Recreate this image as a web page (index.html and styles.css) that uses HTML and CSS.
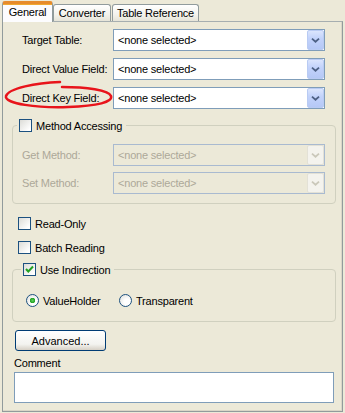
FILE: index.html
```html
<!DOCTYPE html>
<html lang="en">
<head>
    <meta charset="UTF-8">
    <title>Mapping Properties</title>
    <link rel="stylesheet" href="styles.css">
</head>
<body>
    <div class="window">
        <div class="tabs">
            <div class="tab active">General</div>
            <div class="tab converter">Converter</div>
            <div class="tab reference">Table Reference</div>
        </div>
        <div class="panel">
            <div class="form-grid top">
                <label>Target Table:</label>
                <div class="combo"><span>&lt;none selected&gt;</span><i class="drop"><svg viewBox="0 0 17 20"><path d="M4.5 8.5 L8.5 12 L12.5 8.5"/></svg></i></div>
                <label>Direct Value Field:</label>
                <div class="combo"><span>&lt;none selected&gt;</span><i class="drop"><svg viewBox="0 0 17 20"><path d="M4.5 8.5 L8.5 12 L12.5 8.5"/></svg></i></div>
                <label>Direct Key Field:</label>
                <div class="combo"><span>&lt;none selected&gt;</span><i class="drop"><svg viewBox="0 0 17 20"><path d="M4.5 8.5 L8.5 12 L12.5 8.5"/></svg></i></div>
            </div>

            <fieldset class="group method">
                <legend><span class="check"></span>Method Accessing</legend>
                <div class="form-grid">
                    <label class="disabled">Get Method:</label>
                    <div class="combo disabled"><span>&lt;none selected&gt;</span><i class="drop"><svg viewBox="0 0 17 20"><path d="M4.5 8.5 L8.5 12 L12.5 8.5"/></svg></i></div>
                    <label class="disabled">Set Method:</label>
                    <div class="combo disabled"><span>&lt;none selected&gt;</span><i class="drop"><svg viewBox="0 0 17 20"><path d="M4.5 8.5 L8.5 12 L12.5 8.5"/></svg></i></div>
                </div>
            </fieldset>

            <div class="checks">
                <div class="check-row"><span class="check"></span>Read-Only</div>
                <div class="check-row"><span class="check"></span>Batch Reading</div>
            </div>

            <fieldset class="group indirection">
                <legend><span class="check checked"><svg viewBox="0 0 11 11"><path d="M2 5 L4.3 7.5 L9 2.5"/></svg></span>Use Indirection</legend>
                <div class="radios">
                    <div class="radio-row"><span class="radio on"></span>ValueHolder</div>
                    <div class="radio-row"><span class="radio"></span>Transparent</div>
                </div>
            </fieldset>

            <button class="btn">Advanced...</button>
            <div class="comment-label">Comment</div>
            <div class="textbox"></div>
        </div>

        <svg class="annotation" viewBox="0 0 345 413">
            <path d="M60 82 C36 83 9 88 6 96 C4 104 38 108 68 107 C98 106 113 102 111 96 C109 90 86 87 62 87"/>
        </svg>
    </div>
</body>
</html>
```

FILE: styles.css
```css
:root {
    --xp-bg: #ece9d8;
    --tab-border: #919b9c;
    --field-border: #7f9db9;
    --group-border: #d0d0bf;
    --check-border: #1c5180;
    --disabled-text: #aca899;
}
* {
    box-sizing: border-box;
}
body {
    margin: 0;
    background: var(--xp-bg);
    font-family: 'Liberation Sans', Arial, sans-serif;
    font-size: 11px;
    letter-spacing: -0.2px;
    color: #000;
}
.window {
    position: relative;
    width: 345px;
    height: 413px;
}

/* tabs */
.tabs {
    display: flex;
    align-items: flex-end;
    height: 21px;
    padding-left: 2px;
}
.tab {
    height: 17px;
    border: 1px solid var(--tab-border);
    border-bottom: none;
    border-radius: 3px 3px 0 0;
    background: linear-gradient(#ffffff, #f3f2ec 60%, #e6e4d8);
    line-height: 16px;
    text-align: center;
    white-space: nowrap;
}
.tab.converter {
    width: 58px;
}
.tab.reference {
    width: 87px;
    margin-left: 1px;
}
.tab.active {
    position: relative;
    z-index: 2;
    width: 51px;
    height: 21px;
    margin-bottom: -1px;
    border-top: 3px solid #ffc83c;
    box-shadow: inset 0 1px 0 #f0a830;
    background: #fcfcfe;
    line-height: 17px;
    border-color: #e68b2c var(--tab-border) transparent var(--tab-border);
}

/* panel */
.panel {
    width: 341px;
    height: 391px;
    margin-left: 2px;
    padding: 7px 6px 7px 0;
    border: 1px solid var(--tab-border);
    border-top-color: #a6aeb0;
    background: var(--xp-bg);
    box-shadow: inset -1px -1px 0 #d9d6c7;
}
.form-grid {
    display: grid;
    grid-template-columns: 91px 212px;
    grid-auto-rows: 22px;
    row-gap: 7px;
    align-items: center;
}
.form-grid.top {
    margin-left: 19px;
}
.form-grid label.disabled {
    color: var(--disabled-text);
}
.combo {
    display: flex;
    align-items: center;
    height: 22px;
    border: 1px solid var(--field-border);
    background: #fff;
}
.combo span {
    flex: 1;
    padding-left: 4px;
}
.drop {
    width: 17px;
    height: 20px;
    border: 1px solid #b9cbf3;
    border-radius: 2px;
    background: linear-gradient(#dbe5fd, #c3d3fb 40%, #b5c8f6);
}
.drop svg {
    display: block;
    width: 15px;
    height: 18px;
}
.drop path {
    fill: none;
    stroke: #4d6185;
    stroke-width: 2;
}
.combo.disabled {
    border-color: #a9bad0;
    background: transparent;
    color: var(--disabled-text);
}
.combo.disabled .drop {
    border-color: #e3e1d6;
    background: #f4f3ee;
}
.combo.disabled .drop path {
    stroke: #cac8bb;
}

/* group boxes */
.group {
    margin: 10px 0 0 9px;
    width: 324px;
    border: 1px solid var(--group-border);
    border-radius: 4px;
    min-width: 0;
}
.group legend {
    display: flex;
    align-items: center;
    gap: 4px;
    height: 13px;
    margin-left: -5px;
    padding: 0 4px 0 2px;
}
.method {
    padding: 12px 10px 9px 9px;
}
.method .form-grid {
    row-gap: 6px;
}
.indirection {
    margin-top: 9px;
    padding: 18px 10px 14px 13px;
}

/* checkboxes and radios */
.check {
    display: inline-block;
    width: 13px;
    height: 13px;
    border: 1px solid var(--check-border);
    background: linear-gradient(135deg, #dcdcd7, #ffffff 85%);
}
.check svg {
    display: block;
    width: 11px;
    height: 11px;
}
.check path {
    fill: none;
    stroke: #21a121;
    stroke-width: 2;
}
.checks {
    display: flex;
    flex-direction: column;
    gap: 11px;
    margin: 13px 0 0 15px;
}
.check-row, .radio-row {
    display: flex;
    align-items: center;
    gap: 4px;
    height: 13px;
}
.radios {
    display: flex;
    gap: 14px;
}
.radio-row {
    width: 79px;
}
.radio {
    display: inline-block;
    width: 13px;
    height: 13px;
    border: 1px solid var(--check-border);
    border-radius: 50%;
    background: radial-gradient(circle at 65% 65%, #ffffff 30%, #dcdcd7);
}
.radio.on {
    background:
        radial-gradient(circle, #5ccf5c 0, #21a121 2.5px, transparent 3px),
        radial-gradient(circle at 65% 65%, #ffffff 30%, #dcdcd7);
}

/* bottom */
.btn {
    display: block;
    width: 91px;
    height: 21px;
    margin: 8px 0 0 12px;
    padding: 0;
    border: 1px solid #003c74;
    border-radius: 3px;
    background: linear-gradient(#ffffff, #f3f3ef 70%, #d6d0c5);
    font: inherit;
    color: #000;
}
.comment-label {
    margin: 6px 0 0 11px;
    height: 13px;
    line-height: 13px;
}
.textbox {
    width: 320px;
    height: 31px;
    margin: 2px 0 0 11px;
    border: 1px solid var(--field-border);
    background: #fff;
}

/* red hand-drawn mark */
.annotation {
    position: absolute;
    top: 0;
    left: 0;
    width: 345px;
    height: 413px;
    pointer-events: none;
}
.annotation path {
    fill: none;
    stroke: #e8141b;
    stroke-width: 2.5;
    stroke-linecap: round;
}
```
